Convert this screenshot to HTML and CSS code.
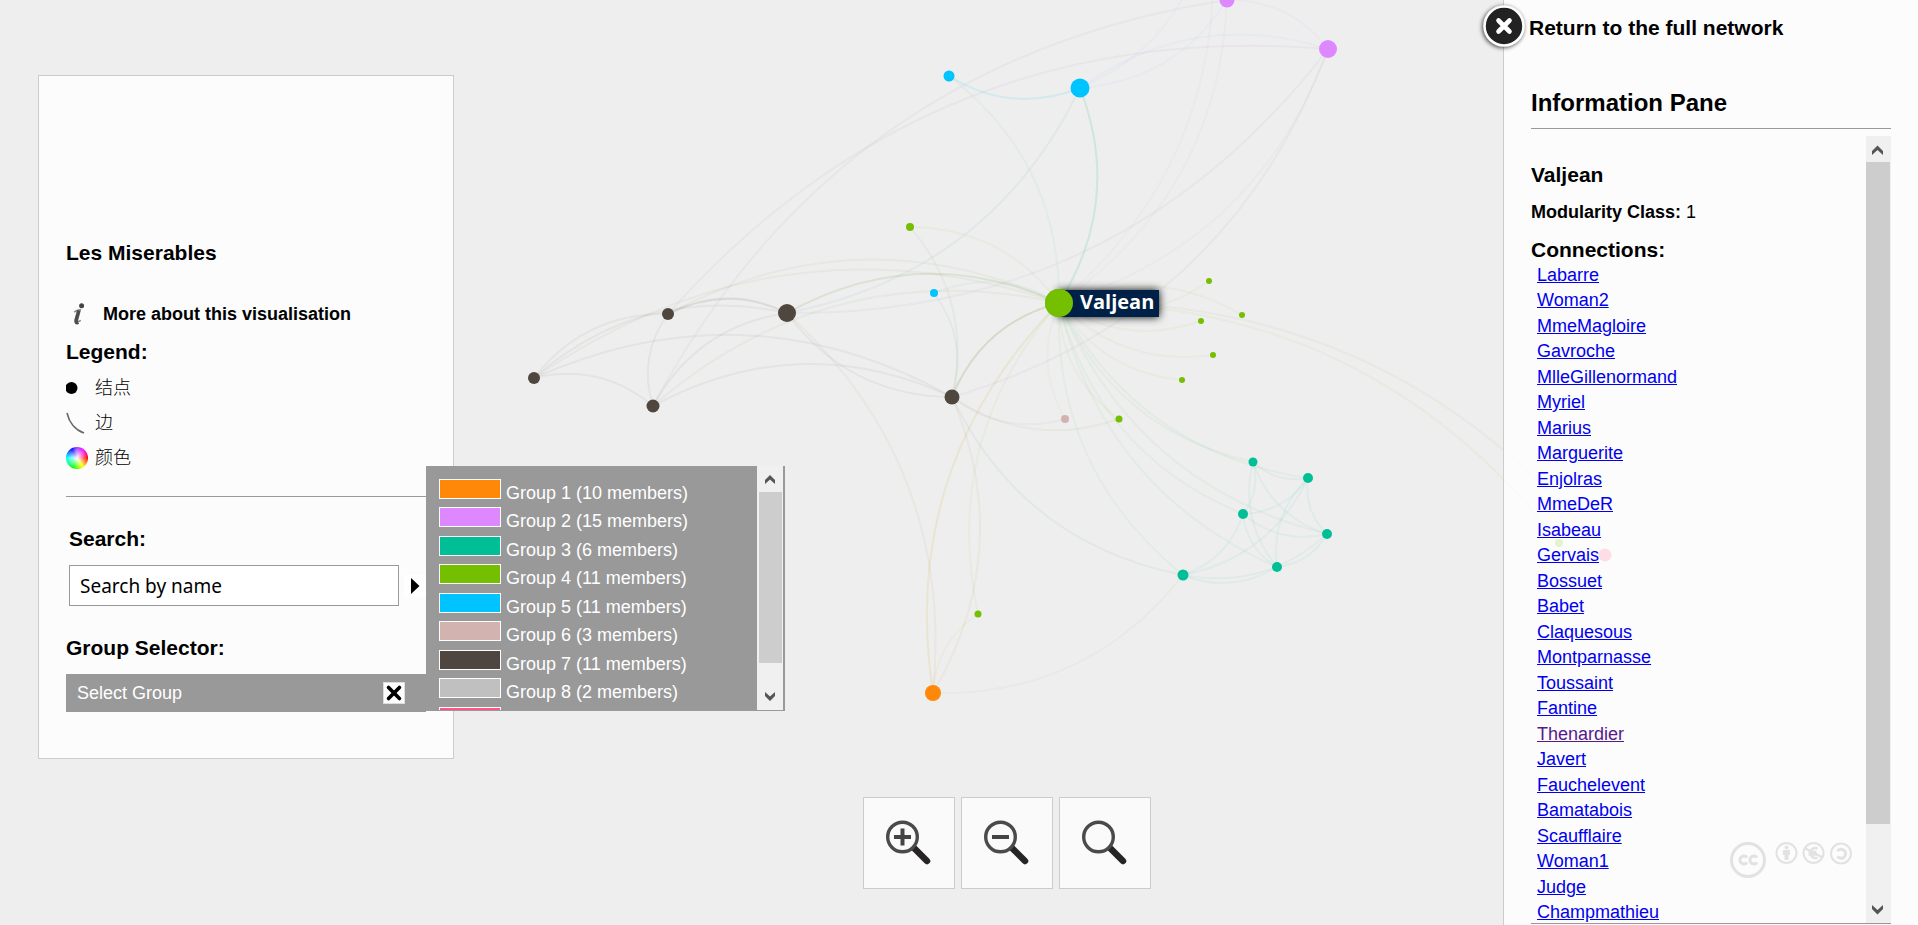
FILE: index.html
```html
<!DOCTYPE html>
<html lang="en">
<head>
<meta charset="utf-8">
<title>Les Miserables</title>
<link rel="stylesheet" href="styles.css">
</head>
<body>
<svg class="network" id="network" role="img" aria-label="Character network">
  <g id="edges" class="edges"></g>
  <g id="nodes"></g>
  <g class="active">
    <rect class="active-box" x="1058" y="290" width="101" height="27"/>
    <circle cx="1059" cy="303" r="14" fill="#74c000"/>
    <text class="active-label" x="1080" y="309">Valjean</text>
  </g>
</svg>

<main class="layout">
  <section class="panel">
    <h1 class="heading">Les Miserables</h1>
    <a class="more" href="#about">
      <svg class="icon" viewBox="0 0 22 22" aria-hidden="true"><circle cx="15.600" cy="2.800" r="2.500" fill="#444"/><path d="M8.200 9.200Q10.500 7 14.200 6.700L11.400 17.600Q11.200 19.600 14.800 17.400" fill="none" stroke="#888" stroke-width="1.600"/><path d="M12.800 7.500L10 17.200Q9.400 20.600 12.400 19.400" fill="none" stroke="#4c4c4c" stroke-width="3.400"/></svg>
      <span>More about this visualisation</span>
    </a>
    <h2 class="heading legend-title">Legend:</h2>
    <ul class="legend">
      <li><svg class="icon" viewBox="0 0 22 22" aria-hidden="true"><circle cx="5.500" cy="11" r="6" fill="#000"/></svg>结点</li>
      <li><svg class="icon" viewBox="0 0 22 22" aria-hidden="true"><path d="M1 1C3 10 9 18 18 21" fill="none" stroke="#666" stroke-width="1.600"/></svg>边</li>
      <li><span class="icon wheel"></span>颜色</li>
    </ul>
    <hr class="rule">
    <form class="search">
      <label class="heading" for="q">Search:</label>
      <div class="search-row">
        <input id="q" type="text" value="Search by name">
        <button type="button" class="go" aria-label="Search"><svg viewBox="0 0 22 22" aria-hidden="true"><path d="M7 3V19L15.500 11Z" fill="#000"/></svg></button>
      </div>
    </form>
    <h2 class="heading">Group Selector:</h2>
    <div class="selector">
      <button type="button" class="select-group">Select Group</button>
      <button type="button" class="clear" aria-label="Close"><svg viewBox="0 0 22 22" aria-hidden="true"><path d="M5 5L17 17M17 5L5 17" stroke="#000" stroke-width="4" stroke-linecap="round"/></svg></button>
      <div class="popup">
        <ul class="groups">
          <li><button type="button"><i class="swatch orange"></i>Group 1 (10 members)</button></li>
          <li><button type="button"><i class="swatch violet"></i>Group 2 (15 members)</button></li>
          <li><button type="button"><i class="swatch teal"></i>Group 3 (6 members)</button></li>
          <li><button type="button"><i class="swatch green"></i>Group 4 (11 members)</button></li>
          <li><button type="button"><i class="swatch blue"></i>Group 5 (11 members)</button></li>
          <li><button type="button"><i class="swatch rose"></i>Group 6 (3 members)</button></li>
          <li><button type="button"><i class="swatch brown"></i>Group 7 (11 members)</button></li>
          <li><button type="button"><i class="swatch silver"></i>Group 8 (2 members)</button></li>
          <li><button type="button" aria-label="Group 9"><i class="swatch pink"></i></button></li>
        </ul>
        <div class="scrollbar scrollbar-popup" aria-hidden="true">
          <svg viewBox="0 0 26 26"><path d="M8 18V14L13 9L18 14V18L13 13.500Z" fill="#555"/></svg>
          <div class="track"><div class="thumb"></div></div>
          <svg viewBox="0 0 26 26"><path d="M8 8V12L13 17L18 12V8L13 12.500Z" fill="#555"/></svg>
        </div>
      </div>
    </div>
  </section>

  <nav class="zoom" aria-label="Zoom">
    <button type="button" aria-label="Zoom in"><svg viewBox="0 0 46 46" aria-hidden="true"><path d="M27 27L41 41" stroke="#262425" stroke-width="6.500" stroke-linecap="round"/><circle cx="16.500" cy="17" r="14.800" fill="#fafafa" stroke="#4a4a4a" stroke-width="3.400"/><path d="M8 17H25M16.500 8.500V25.500" stroke="#444" stroke-width="4"/></svg></button>
    <button type="button" aria-label="Zoom out"><svg viewBox="0 0 46 46" aria-hidden="true"><path d="M27 27L41 41" stroke="#262425" stroke-width="6.500" stroke-linecap="round"/><circle cx="16.500" cy="17" r="14.800" fill="#fafafa" stroke="#4a4a4a" stroke-width="3.400"/><path d="M8 17H25" stroke="#444" stroke-width="4"/></svg></button>
    <button type="button" aria-label="Reset zoom"><svg viewBox="0 0 46 46" aria-hidden="true"><path d="M27 27L41 41" stroke="#262425" stroke-width="6.500" stroke-linecap="round"/><circle cx="16.500" cy="17" r="14.800" fill="#fafafa" stroke="#4a4a4a" stroke-width="3.400"/></svg></button>
  </nav>

  <aside class="info">
    <a class="return" href="#full">
      <svg class="return-icon" viewBox="0 0 48 48" aria-hidden="true"><circle cx="24" cy="24" r="19.500" fill="#222" stroke="#fff" stroke-width="2.600"/><path d="M18.500 18.500L29.500 29.500M29.500 18.500L18.500 29.500" stroke="#fff" stroke-width="4.600" stroke-linecap="round"/></svg>
      Return to the full network
    </a>
    <h2 class="info-title">Information Pane</h2>
    <div class="details">
      <div class="details-text">
        <h3 class="heading">Valjean</h3>
        <p class="attribute"><strong>Modularity Class:</strong> 1</p>
        <h3 class="heading">Connections:</h3>
        <ul class="links">
          <li><a href="#Labarre">Labarre</a></li>
          <li><a href="#Woman2">Woman2</a></li>
          <li><a href="#MmeMagloire">MmeMagloire</a></li>
          <li><a href="#Gavroche">Gavroche</a></li>
          <li><a href="#MlleGillenormand">MlleGillenormand</a></li>
          <li><a href="#Myriel">Myriel</a></li>
          <li><a href="#Marius">Marius</a></li>
          <li><a href="#Marguerite">Marguerite</a></li>
          <li><a href="#Enjolras">Enjolras</a></li>
          <li><a href="#MmeDeR">MmeDeR</a></li>
          <li><a href="#Isabeau">Isabeau</a></li>
          <li><a href="#Gervais">Gervais</a></li>
          <li><a href="#Bossuet">Bossuet</a></li>
          <li><a href="#Babet">Babet</a></li>
          <li><a href="#Claquesous">Claquesous</a></li>
          <li><a href="#Montparnasse">Montparnasse</a></li>
          <li><a href="#Toussaint">Toussaint</a></li>
          <li><a href="#Fantine">Fantine</a></li>
          <li><a class="seen" href="#Thenardier">Thenardier</a></li>
          <li><a href="#Javert">Javert</a></li>
          <li><a href="#Fauchelevent">Fauchelevent</a></li>
          <li><a href="#Bamatabois">Bamatabois</a></li>
          <li><a href="#Scaufflaire">Scaufflaire</a></li>
          <li><a href="#Woman1">Woman1</a></li>
          <li><a href="#Judge">Judge</a></li>
          <li><a href="#Champmathieu">Champmathieu</a></li>
        </ul>
      </div>
      <div class="scrollbar scrollbar-info" aria-hidden="true">
        <svg viewBox="0 0 26 26"><path d="M6 19V15L11.500 9.500L17 15V19L11.500 14Z" fill="#555"/></svg>
        <div class="track"><div class="thumb"></div></div>
        <svg viewBox="0 0 26 26"><path d="M6 8V12L11.500 17.500L17 12V8L11.500 13Z" fill="#555"/></svg>
      </div>
    </div>
    <svg class="licence" viewBox="0 0 124 40" role="img" aria-label="Creative Commons licence">
      <g fill="none" stroke="#e2e2e2" stroke-width="3">
        <circle cx="18" cy="20" r="16.500"/>
        <path d="M17 17.500A4 4 0 1 0 17 22.500M27 17.500A4 4 0 1 0 27 22.500"/>
      </g>
      <g fill="none" stroke="#e2e2e2" stroke-width="2">
        <circle cx="56.500" cy="13" r="10"/>
        <circle cx="83.500" cy="13" r="10"/>
        <circle cx="111" cy="13.500" r="10"/>
        <path d="M87.500 8.500A5 5 0 1 0 87.500 17.500M78.500 12H86.500M78.500 14.500H87.500" stroke-width="2.500"/>
        <path d="M74.500 8L92.500 17.500"/>
        <path d="M107.500 11A4.500 4.500 0 1 1 107.500 16.500" stroke-width="3"/>
      </g>
      <path d="M53 10H60V15H58.500V20H54.500V15H53Z" fill="#e2e2e2"/><circle cx="56.500" cy="7.500" r="2" fill="#e2e2e2"/>
    </svg>
  </aside>
</main>
<script src="network.js"></script>
</body>
</html>
```

FILE: styles.css
```css
* { box-sizing: border-box; }

body {
  margin: 0;
  min-height: 100vh;
  overflow: hidden;
  background: #eee;
  color: #000;
  font: 18px/20px "Liberation Sans", "Noto Sans CJK SC", sans-serif;
}

h1, h2, h3, p, ul { margin: 0; padding: 0; }
ul { list-style: none; }
button { border: 0; padding: 0; background: none; font: inherit; color: inherit; cursor: pointer; }
svg { display: block; }

.network { position: absolute; inset: 0; width: 100%; height: 100%; }
.edges path { fill: none; stroke-width: 2; stroke-opacity: 0.06; }
.edges .strong { stroke-opacity: 0.12; }
.active-box { fill: #002147; filter: drop-shadow(0 0 4px #000); }
.active-label { fill: #fff; font: bold 20px "Open Sans", sans-serif; }

.layout {
  position: relative;
  display: flex;
  justify-content: space-between;
  align-items: flex-start;
  height: 100vh;
}

.heading { display: block; font-size: 21px; line-height: 24px; font-weight: bold; }

/* left panel */
.panel {
  width: 416px;
  margin: 75px 0 0 38px;
  padding: 165px 27px 46px;
  border: 1px solid #ccc;
  background: rgba(255, 255, 255, 0.8);
}
.icon { flex: none; width: 22px; height: 22px; }
.more {
  display: flex;
  align-items: center;
  gap: 15px;
  margin-top: 38px;
  color: inherit;
  font-weight: bold;
  text-decoration: none;
}
.legend-title { margin-top: 15px; }
.legend { display: grid; gap: 13px; margin-top: 13px; font-weight: 300; }
.legend li { display: flex; align-items: center; gap: 7px; height: 22px; }
.wheel {
  border-radius: 50%;
  background:
    radial-gradient(circle, #fff 0%, rgba(255, 255, 255, 0) 70%),
    conic-gradient(#a040ff, #f0f 45deg, #f00 90deg, #ff0 145deg, #0f0 200deg, #0ff 270deg, #00f 330deg, #a040ff);
}
.rule { margin: 27px 0 30px; border: 0; border-top: 1px solid #999; }
.search { padding-left: 3px; margin-bottom: 30px; }
.search-row { display: flex; align-items: center; justify-content: space-between; margin-top: 14px; }
.search input {
  width: 330px;
  height: 41px;
  padding: 0 10px;
  border: 1px solid #999;
  background: #fff;
  font: 19px "Noto Sans", sans-serif;
  color: #000;
}
.go { width: 22px; height: 22px; background: #fff; }
.selector {
  position: relative;
  display: flex;
  align-items: center;
  margin-top: 14px;
  padding: 0 21px 0 11px;
  height: 38px;
  background: #999;
}
.select-group { flex: 1; text-align: left; color: #fff; }
.clear { width: 22px; height: 22px; background: #fff; border: 1px solid #ddd; }

.popup {
  position: absolute;
  left: 100%;
  bottom: 1px;
  display: flex;
  width: 359px;
  height: 245px;
  padding: 0 2px 1px 13px;
  background: #999;
  overflow: hidden;
}
.groups { flex: 1; height: 244px; padding-top: 13px; overflow: hidden; }
.groups li { height: 28px; }
.groups li:nth-child(even) { height: 29px; }
.groups button { display: flex; align-items: baseline; gap: 5px; color: #fff; }
.swatch { width: 62px; height: 20px; border: 1px solid #fff; }
.orange { background: #ff8809; }
.violet { background: #dd88ff; }
.teal { background: #00bf96; }
.green { background: #74c000; }
.blue { background: #00c4ff; }
.rose { background: #d3b3b0; }
.brown { background: #4e463f; }
.silver { background: #c0c0c0; }
.pink { background: #ff5584; }

.scrollbar { flex: none; display: flex; flex-direction: column; background: #f0f0f0; }
.scrollbar svg { width: 26px; height: 26px; }
.track { flex: 1; }
.thumb { background: #cdcdcd; }
.scrollbar-popup { width: 26px; }
.scrollbar-popup .thumb { height: 89%; margin: 0 1px 0 2px; }
.scrollbar-info { width: 25px; }
.scrollbar-info .thumb { height: 90%; margin-right: 1px; }

/* zoom buttons */
.zoom { display: flex; gap: 6px; align-self: flex-end; margin: 0 0 36px 56px; }
.zoom button {
  display: grid;
  place-items: center;
  width: 92px;
  height: 92px;
  border: 1px solid #ccc;
  background: #fafafa;
}
.zoom svg { width: 46px; height: 46px; }

/* right pane */
.info {
  position: relative;
  display: flex;
  flex-direction: column;
  width: 415px;
  height: 100vh;
  padding: 16px 27px 1px;
  border-left: 1px solid #ccc;
  background: rgba(255, 255, 255, 0.8);
}
.return { margin-left: -2px; color: inherit; font-size: 21px; line-height: 24px; font-weight: bold; text-decoration: none; }
.return-icon {
  position: absolute;
  left: -24px;
  top: 2px;
  width: 48px;
  height: 48px;
  filter: drop-shadow(-1px 1px 2px rgba(0, 0, 0, 0.7));
}
.info-title {
  margin-top: 49px;
  padding-bottom: 11px;
  border-bottom: 1px solid #999;
  font-size: 24px;
  line-height: 28px;
}
.details {
  flex: 1;
  display: flex;
  min-height: 0;
  margin-top: 7px;
  border-bottom: 1px solid #999;
}
.details-text { flex: 1; padding-top: 27px; overflow: hidden; }
.attribute { margin: 15px 0 16px; }
.links { padding-left: 6px; }
.links li { line-height: 26px; }
.links li:nth-child(even) { line-height: 25px; }
.links a { color: #0000ee; }
.links .seen { color: #551a8b; }
.licence { position: absolute; right: 64px; bottom: 45px; width: 124px; height: 40px; }
```

FILE: network.js
```js
const C = { brown: "#4e463f", green: "#74c000", blue: "#00c4ff", violet: "#dd88ff", teal: "#00bf96", orange: "#ff8809", rose: "#d3b3b0", pink: "#ff5584" };

// id: [x, y, radius, colour]
const nodes = {
  V: [1059, 303, 14, "green"],
  A: [534, 378, 6, "brown"], B: [668, 314, 6, "brown"], K: [653, 406, 6.5, "brown"],
  D: [787, 313, 9, "brown"], E: [952, 397, 7.5, "brown"],
  F: [910, 227, 4, "green"], G: [934, 293, 4, "blue"], R: [1065, 419, 4, "rose"],
  g1: [1209, 281, 3, "green"], g2: [1242, 315, 3, "green"], g3: [1201, 321, 3, "green"],
  g4: [1213, 355, 3, "green"], g5: [1182, 380, 3, "green"], g6: [1119, 419, 3.5, "green"],
  g7: [978, 614, 3.5, "green"], O: [933, 693, 8, "orange"],
  T1: [1253, 462, 4.5, "teal"], T2: [1308, 478, 5, "teal"], T3: [1243, 514, 5, "teal"],
  T4: [1327, 534, 5, "teal"], T5: [1277, 567, 5, "teal"], T6: [1183, 575, 5.5, "teal"],
  H: [949, 76, 5.5, "blue"], N: [1080, 88, 9.5, "blue"],
  P1: [1227, 0, 7.5, "violet"], P2: [1328, 49, 9, "violet"],
  X1: [1559, 543, 4, "green"], X2: [1605, 555, 6.5, "pink"],
  Y1: [1212, -60, 5, "violet"], Y2: [1205, -60, 5, "violet"]
};

// source-target; a trailing ! marks a frequent co-occurrence
const edges = `A-V B-V K-V D-V! G-V F-V F-E G-E E-V! E-V A-B A-D A-K A-E K-E B-D! K-B K-D E-D
D-O O-V! g7-V E-O O-g7 T6-O T6-E R-E g6-E P2-E P2-V P2-D P1-V Y1-V N-V! N-V N-D H-V N-H! N-P2 P1-N Y2-N
B-P2 K-P1 P1-P2 g1-V V-g2 g3-V g4-V g5-V g6-V R-V T1-V T2-V T3-V T4-V T5-V T6-V V-X1 V-X2
T2-T1 T1-T3 T5-T1 T4-T1 T2-T3 T2-T6 T5-T2 T4-T2 T4-T3 T5-T3 T3-T6 T4-T5 T4-T6 T5-T6`.split(/\s+/);

const mix = (a, b) => "#" + [1, 3, 5].map(i =>
  Math.round((parseInt(a.substr(i, 2), 16) + parseInt(b.substr(i, 2), 16)) / 2).toString(16).padStart(2, "0")).join("");

function add(parent, tag, attrs) {
  const el = document.createElementNS("http://www.w3.org/2000/svg", tag);
  for (const k in attrs) el.setAttribute(k, attrs[k]);
  document.getElementById(parent).appendChild(el);
}

for (const e of edges) {
  const [s, t] = e.replace("!", "").split("-").map(k => nodes[k]);
  const cx = (s[0] + t[0]) / 2 + (t[1] - s[1]) / 4;
  const cy = (s[1] + t[1]) / 2 + (s[0] - t[0]) / 4;
  add("edges", "path", {
    d: `M${s[0]} ${s[1]}Q${cx} ${cy} ${t[0]} ${t[1]}`,
    stroke: mix(C[s[3]], C[t[3]]),
    class: e.endsWith("!") ? "strong" : "weak"
  });
}
for (const id in nodes) {
  const [cx, cy, r, c] = nodes[id];
  add("nodes", "circle", { cx, cy, r, fill: C[c] });
}
```
